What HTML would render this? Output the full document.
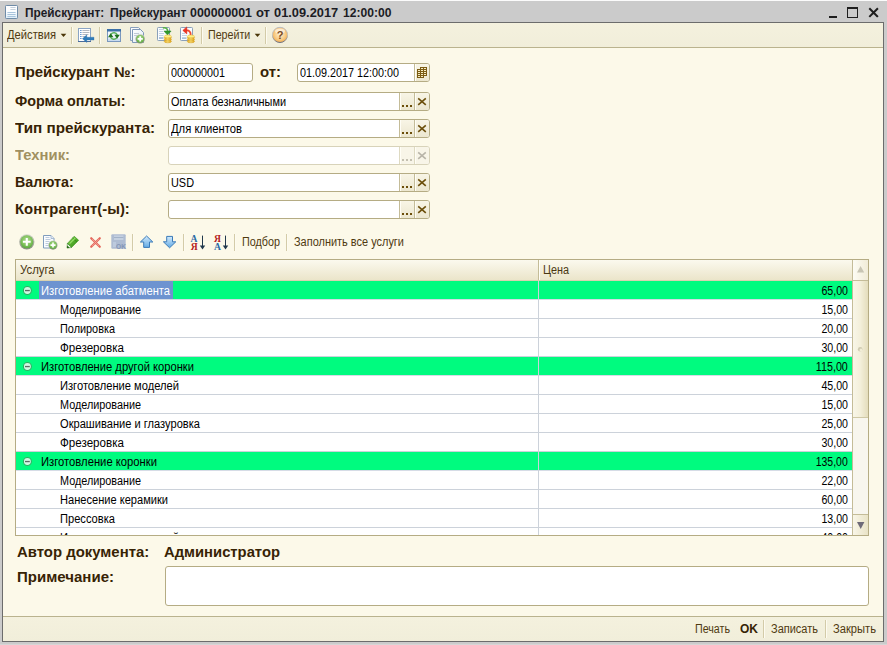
<!DOCTYPE html>
<html><head><meta charset="utf-8">
<style>
html,body{margin:0;padding:0;}
body{width:887px;height:645px;position:relative;overflow:hidden;background:#cbcbcb;font-family:"Liberation Sans",sans-serif;}
.abs,.t,.ic,.row,.fld,.sep{position:absolute;}
.t{white-space:nowrap;line-height:16px;height:16px;}
#topline{left:0;top:0;width:887px;height:1px;background:#fbfbfb;}
#botline{left:0;top:644px;width:887px;height:1px;background:#d6d6d6;}
#frame{left:2px;top:22px;width:880px;height:618px;border:1px solid #6c6c6c;background:#fcf9e9;}
#toolbar{left:3px;top:23px;width:880px;height:24px;background:linear-gradient(#f4f1de,#f1eeda);border-bottom:1px solid #bab38e;}
#botbar{left:3px;top:616px;width:880px;height:24px;background:linear-gradient(#f4f1de,#f1eeda);border-top:1px solid #bab38e;}
.sep{width:1px;background:#d3cba8;box-shadow:1px 0 0 #fdfbf0;}
.fld{height:17px;border:1px solid #b5ac84;border-radius:3px;background:#fff;overflow:hidden;}
.fld.dis{border-color:#d8d3ba;background:#fff;}
.fld .btn{position:absolute;top:0;bottom:0;width:14px;border-left:1px solid #c4bc98;background:linear-gradient(#f8f5e6,#ece7d0);box-shadow:inset 1px 0 0 #fffef6;}
.fld.dis .btn{border-left-color:#dedac2;background:#f8f5e8;}
#tbl{left:15px;top:259px;width:852px;height:275px;border:1px solid #b5ac84;background:#fff;}
#clip{left:16px;top:260px;width:837px;height:275px;overflow:hidden;}
#thead{left:16px;top:260px;width:837px;height:20px;background:linear-gradient(#fbf9ee,#f3efdc 50%,#ebe5ca);border-bottom:1px solid #d9d2b0;}
.row{left:0;width:837px;height:18px;border-bottom:1px solid #ccd2da;background:#fff;}
.row.g{background:#00fb7f;border-bottom-color:#d6dce6;}
#sel{left:23px;top:21px;width:134px;height:18px;background:#6d93d0;}
#colsep{left:522px;top:21px;width:1px;height:260px;background:#ccd2da;}
#hsep{left:538px;top:260px;width:1px;height:20px;background:#c4bc98;box-shadow:1px 0 0 #fffef6;}
#sbar{left:852px;top:260px;width:15px;height:275px;border-left:1px solid #c4bc98;background:#f8f6ee;}
#sup{left:853px;top:260px;width:15px;height:20px;background:linear-gradient(90deg,#fdfcf4,#f1ecd8);border-bottom:1px solid #c4bc98;}
#sthumb{left:853px;top:281px;width:15px;height:136px;background:linear-gradient(90deg,#f9f6e8,#f3efda 50%,#e4ddbc);border-bottom:1px solid #cfc8a6;}
#sdown{left:853px;top:514px;width:15px;height:20px;background:linear-gradient(90deg,#f9f6e8,#e9e3c6);border-top:1px solid #c4bc98;}
#note{left:165px;top:566px;width:702px;height:38px;border:1px solid #b5ac84;border-radius:3px;background:#fff;}
</style></head><body>
<div class="abs" id="topline"></div>
<div class="abs" id="botline"></div>
<div class="abs" id="frame"></div>
<div class="abs" id="toolbar"></div>
<div class="abs" id="botbar"></div>

<!-- toolbar separators -->
<div class="sep" style="left:71px;top:27px;height:17px"></div>
<div class="sep" style="left:99px;top:27px;height:17px"></div>
<div class="sep" style="left:201px;top:27px;height:17px"></div>
<div class="sep" style="left:265px;top:27px;height:17px"></div>
<div class="sep" style="left:132px;top:234px;height:17px"></div>
<div class="sep" style="left:183px;top:234px;height:17px"></div>
<div class="sep" style="left:234px;top:234px;height:17px"></div>
<div class="sep" style="left:286px;top:234px;height:17px"></div>
<div class="sep" style="left:763px;top:620px;height:18px"></div>
<div class="sep" style="left:825px;top:620px;height:18px"></div>

<!-- fields -->
<div class="fld" style="left:168px;top:63px;width:83px"></div>
<div class="fld" style="left:297px;top:63px;width:131px"><div class="btn" style="right:0"></div></div>
<div class="fld" style="left:168px;top:92px;width:260px"><div class="btn" style="right:15px"></div><div class="btn" style="right:0"></div></div>
<div class="fld" style="left:168px;top:119px;width:260px"><div class="btn" style="right:15px"></div><div class="btn" style="right:0"></div></div>
<div class="fld dis" style="left:168px;top:146px;width:260px"><div class="btn" style="right:15px"></div><div class="btn" style="right:0"></div></div>
<div class="fld" style="left:168px;top:173px;width:260px"><div class="btn" style="right:15px"></div><div class="btn" style="right:0"></div></div>
<div class="fld" style="left:168px;top:200px;width:260px"><div class="btn" style="right:15px"></div><div class="btn" style="right:0"></div></div>

<!-- table -->
<div class="abs" id="tbl"></div>
<div class="abs" id="thead"></div>
<div class="abs" id="hsep"></div>
<div class="abs" id="clip">
<div class="row g" style="top:21px"></div>
<div class="row" style="top:40px"></div>
<div class="row" style="top:59px"></div>
<div class="row" style="top:78px"></div>
<div class="row g" style="top:97px"></div>
<div class="row" style="top:116px"></div>
<div class="row" style="top:135px"></div>
<div class="row" style="top:154px"></div>
<div class="row" style="top:173px"></div>
<div class="row g" style="top:192px"></div>
<div class="row" style="top:211px"></div>
<div class="row" style="top:230px"></div>
<div class="row" style="top:249px"></div>
<div class="row" style="top:268px"></div>
<div class="abs" id="sel"></div>
<div class="abs" id="colsep"></div>
<svg class="abs" style="left:6px;top:25px" width="11" height="11" viewBox="0 0 11 11"><circle cx="5.4" cy="5.5" r="4" fill="#d0f8e4" stroke="#28b060" stroke-width="1.1"/><rect x="3" y="4.9" width="4.8" height="1.3" fill="#5c6c64"/></svg>
<svg class="abs" style="left:6px;top:101px" width="11" height="11" viewBox="0 0 11 11"><circle cx="5.4" cy="5.5" r="4" fill="#d0f8e4" stroke="#28b060" stroke-width="1.1"/><rect x="3" y="4.9" width="4.8" height="1.3" fill="#5c6c64"/></svg>
<svg class="abs" style="left:6px;top:196px" width="11" height="11" viewBox="0 0 11 11"><circle cx="5.4" cy="5.5" r="4" fill="#d0f8e4" stroke="#28b060" stroke-width="1.1"/><rect x="3" y="4.9" width="4.8" height="1.3" fill="#5c6c64"/></svg>
<span id="r0" class="t" style="left:25px;transform-origin:0 50%;top:22.899999999999977px;font-size:12px;font-weight:normal;color:#fff;transform:scaleX(0.9310)">Изготовление абатмента</span>
<span id="p0" class="t" style="right:5.399999999999977px;transform-origin:100% 50%;top:22.899999999999977px;font-size:12px;font-weight:normal;color:#000;transform:scaleX(0.8857)">65,00</span>
<span id="r1" class="t" style="left:44px;transform-origin:0 50%;top:41.89999999999998px;font-size:12px;font-weight:normal;color:#000;transform:scaleX(0.9020)">Моделирование</span>
<span id="p1" class="t" style="right:5.399999999999977px;transform-origin:100% 50%;top:41.89999999999998px;font-size:12px;font-weight:normal;color:#000;transform:scaleX(0.8857)">15,00</span>
<span id="r2" class="t" style="left:44px;transform-origin:0 50%;top:60.89999999999998px;font-size:12px;font-weight:normal;color:#000;transform:scaleX(0.9067)">Полировка</span>
<span id="p2" class="t" style="right:5.399999999999977px;transform-origin:100% 50%;top:60.89999999999998px;font-size:12px;font-weight:normal;color:#000;transform:scaleX(0.8857)">20,00</span>
<span id="r3" class="t" style="left:44px;transform-origin:0 50%;top:79.89999999999998px;font-size:12px;font-weight:normal;color:#000;transform:scaleX(0.9672)">Фрезеровка</span>
<span id="p3" class="t" style="right:5.399999999999977px;transform-origin:100% 50%;top:79.89999999999998px;font-size:12px;font-weight:normal;color:#000;transform:scaleX(0.8857)">30,00</span>
<span id="r4" class="t" style="left:25px;transform-origin:0 50%;top:98.89999999999998px;font-size:12px;font-weight:normal;color:#000;transform:scaleX(0.9320)">Изготовление другой коронки</span>
<span id="p4" class="t" style="right:5.399999999999977px;transform-origin:100% 50%;top:98.89999999999998px;font-size:12px;font-weight:normal;color:#000;transform:scaleX(0.8935)">115,00</span>
<span id="r5" class="t" style="left:44px;transform-origin:0 50%;top:117.89999999999998px;font-size:12px;font-weight:normal;color:#000;transform:scaleX(0.9288)">Изготовление моделей</span>
<span id="p5" class="t" style="right:5.399999999999977px;transform-origin:100% 50%;top:117.89999999999998px;font-size:12px;font-weight:normal;color:#000;transform:scaleX(0.8857)">45,00</span>
<span id="r6" class="t" style="left:44px;transform-origin:0 50%;top:136.89999999999998px;font-size:12px;font-weight:normal;color:#000;transform:scaleX(0.9020)">Моделирование</span>
<span id="p6" class="t" style="right:5.399999999999977px;transform-origin:100% 50%;top:136.89999999999998px;font-size:12px;font-weight:normal;color:#000;transform:scaleX(0.8857)">15,00</span>
<span id="r7" class="t" style="left:44px;transform-origin:0 50%;top:155.89999999999998px;font-size:12px;font-weight:normal;color:#000;transform:scaleX(0.9250)">Окрашивание и глазуровка</span>
<span id="p7" class="t" style="right:5.399999999999977px;transform-origin:100% 50%;top:155.89999999999998px;font-size:12px;font-weight:normal;color:#000;transform:scaleX(0.8857)">25,00</span>
<span id="r8" class="t" style="left:44px;transform-origin:0 50%;top:174.89999999999998px;font-size:12px;font-weight:normal;color:#000;transform:scaleX(0.9672)">Фрезеровка</span>
<span id="p8" class="t" style="right:5.399999999999977px;transform-origin:100% 50%;top:174.89999999999998px;font-size:12px;font-weight:normal;color:#000;transform:scaleX(0.8857)">30,00</span>
<span id="r9" class="t" style="left:25px;transform-origin:0 50%;top:193.89999999999998px;font-size:12px;font-weight:normal;color:#000;transform:scaleX(0.9370)">Изготовление коронки</span>
<span id="p9" class="t" style="right:5.399999999999977px;transform-origin:100% 50%;top:193.89999999999998px;font-size:12px;font-weight:normal;color:#000;transform:scaleX(0.8719)">135,00</span>
<span id="r10" class="t" style="left:44px;transform-origin:0 50%;top:212.89999999999998px;font-size:12px;font-weight:normal;color:#000;transform:scaleX(0.9020)">Моделирование</span>
<span id="p10" class="t" style="right:5.399999999999977px;transform-origin:100% 50%;top:212.89999999999998px;font-size:12px;font-weight:normal;color:#000;transform:scaleX(0.8857)">22,00</span>
<span id="r11" class="t" style="left:44px;transform-origin:0 50%;top:231.89999999999998px;font-size:12px;font-weight:normal;color:#000;transform:scaleX(0.9233)">Нанесение керамики</span>
<span id="p11" class="t" style="right:5.399999999999977px;transform-origin:100% 50%;top:231.89999999999998px;font-size:12px;font-weight:normal;color:#000;transform:scaleX(0.8857)">60,00</span>
<span id="r12" class="t" style="left:44px;transform-origin:0 50%;top:250.89999999999998px;font-size:12px;font-weight:normal;color:#000;transform:scaleX(0.9268)">Прессовка</span>
<span id="p12" class="t" style="right:5.399999999999977px;transform-origin:100% 50%;top:250.89999999999998px;font-size:12px;font-weight:normal;color:#000;transform:scaleX(0.8857)">13,00</span>
<span id="r13" class="t" style="left:44px;transform-origin:0 50%;top:269.9px;font-size:12px;font-weight:normal;color:#000;transform:scaleX(0.9288)">Изготовление моделей</span>
<span id="p13" class="t" style="right:5.399999999999977px;transform-origin:100% 50%;top:269.9px;font-size:12px;font-weight:normal;color:#000;transform:scaleX(0.8857)">40,00</span>
</div>
<div class="abs" id="sbar"></div>
<div class="abs" id="sup"></div>
<div class="abs" id="sthumb"></div>
<div class="abs" id="sdown"></div>
<div class="abs" id="note"></div>

<svg class="abs" style="left:0;top:0" width="887" height="645" viewBox="0 0 887 645">
<defs>
<linearGradient id="gGreen" x1="0" y1="0" x2="0" y2="1"><stop offset="0" stop-color="#a8d88c"/><stop offset="0.5" stop-color="#5cb040"/><stop offset="1" stop-color="#3e9428"/></linearGradient>
<linearGradient id="gOrange" x1="0" y1="0" x2="0" y2="1"><stop offset="0" stop-color="#fbe3b4"/><stop offset="0.55" stop-color="#f4b45c"/><stop offset="1" stop-color="#ee9a3a"/></linearGradient>
<linearGradient id="gBlueUp" x1="0" y1="0" x2="0" y2="1"><stop offset="0" stop-color="#d2eafc"/><stop offset="1" stop-color="#62aae4"/></linearGradient>
<linearGradient id="gGold" x1="0" y1="0" x2="1" y2="0"><stop offset="0" stop-color="#e8b020"/><stop offset="0.5" stop-color="#fbe27a"/><stop offset="1" stop-color="#e0a010"/></linearGradient>
<linearGradient id="gDoc" x1="0" y1="0" x2="1" y2="1"><stop offset="0" stop-color="#ffffff"/><stop offset="1" stop-color="#dfe9f4"/></linearGradient>
<linearGradient id="gPencil" x1="0" y1="0" x2="1" y2="1"><stop offset="0" stop-color="#7ed048"/><stop offset="1" stop-color="#2e8a12"/></linearGradient>
<radialGradient id="gGreenR" cx="0.5" cy="0.4" r="0.6"><stop offset="0" stop-color="#b0dc94"/><stop offset="0.6" stop-color="#84c460"/><stop offset="1" stop-color="#5aa840"/></radialGradient>
<linearGradient id="gRing" x1="0" y1="0" x2="0" y2="1"><stop offset="0" stop-color="#d4d8cc"/><stop offset="1" stop-color="#888c80"/></linearGradient>
<radialGradient id="gHelp" cx="0.5" cy="0.45" r="0.6"><stop offset="0" stop-color="#fdf0d4"/><stop offset="0.55" stop-color="#f9cf8c"/><stop offset="1" stop-color="#f2a540"/></radialGradient>
<linearGradient id="gRing2" x1="0" y1="0" x2="0" y2="1"><stop offset="0" stop-color="#b8bcc4"/><stop offset="0.5" stop-color="#c8c4b8"/><stop offset="1" stop-color="#6c7080"/></linearGradient>
<linearGradient id="gTDoc" x1="0" y1="0" x2="0" y2="1"><stop offset="0" stop-color="#ffffff"/><stop offset="0.5" stop-color="#fbfdff"/><stop offset="1" stop-color="#dcecf8"/></linearGradient>
</defs>

<!-- window title icon (document) -->
<g>
<rect x="5.5" y="5.5" width="12" height="13" rx="0.8" fill="url(#gTDoc)" stroke="#6f8ca8" stroke-width="1"/>
<path d="M10.4 7.5h5.2M10.4 9.5h5.2" stroke="#c0ccd8" stroke-width="0.9"/>
<path d="M7.4 12.5h8.2M7.4 14.5h8.2M7.4 16.5h8.2" stroke="#a8c4dc" stroke-width="1"/>
</g>

<!-- window controls -->
<rect x="829" y="16" width="8" height="2" fill="#1e1e1e"/>
<rect x="847.5" y="8" width="10" height="9.5" fill="none" stroke="#1e1e1e" stroke-width="1"/>
<rect x="847" y="7" width="11" height="2" fill="#1e1e1e"/>
<path d="M870 9l7.2 7.2M877.2 9l-7.2 7.2" stroke="#1e1e1e" stroke-width="2" stroke-linecap="square"/>

<!-- toolbar dropdown arrows -->
<path d="M60.7 33.7h5.6l-2.8 3.2z" fill="#4a3608"/>
<path d="M254.7 33.7h5.6l-2.8 3.2z" fill="#4a3608"/>

<!-- toolbar icon 1: list + arrow -->
<g>
<rect x="78.5" y="28.5" width="12" height="13" fill="#fff" stroke="#8aa4c4"/>
<rect x="78" y="41" width="13" height="1" fill="#4a6c9c"/>
<g fill="#6a9cd4"><rect x="80" y="30" width="1.6" height="1"/><rect x="80" y="32" width="1.6" height="1"/><rect x="80" y="34" width="1.6" height="1"/><rect x="80" y="36" width="1.6" height="1"/><rect x="80" y="38" width="1.6" height="1"/></g>
<g fill="#b4b8c0"><rect x="82.4" y="30" width="7" height="1"/><rect x="82.4" y="32" width="7" height="1"/><rect x="82.4" y="34" width="6" height="1"/><rect x="82.4" y="36" width="3" height="1"/></g>
<path d="M82.4 38.7l4.4-3.9v2.4h7.2v2.9h-7.2v2.5z" fill="#2f7cba" stroke="#2a6aa4" stroke-width="0.3"/>
</g>

<!-- toolbar icon 2: window refresh -->
<g>
<rect x="107.5" y="29.5" width="13" height="12" fill="#f0f6fc" stroke="#7a98be"/>
<rect x="107" y="29" width="14" height="2.5" fill="#3c70a8"/>
<rect x="108" y="38.5" width="12" height="2.5" fill="#cadcf0"/>
<path d="M111 34.2A3.7 3.7 0 0 1 117.3 35" fill="none" stroke="#5cb45c" stroke-width="1.5"/>
<path d="M116.6 38A3.7 3.7 0 0 1 110.5 37" fill="none" stroke="#5cb45c" stroke-width="1.5"/>
<path d="M108 37.2h5.4l-2.7-4z" fill="#1e701e"/>
<path d="M114.4 34.8h5.4l-2.7 4z" fill="#1e701e"/>
</g>

<!-- toolbar icon 3: copy + plus -->
<g>
<path d="M130.5 27.5h8l3 3v10h-11z" fill="url(#gDoc)" stroke="#8aa0bc"/>
<path d="M132.5 29.5h8l3 3v10h-11z" fill="url(#gDoc)" stroke="#7f98b8"/>
<path d="M134 33.5h5M134 35.5h4" stroke="#c0cad8"/>
<circle cx="140.2" cy="38.8" r="4.8" fill="url(#gRing)"/><circle cx="140.2" cy="38.8" r="3.9" fill="url(#gGreenR)"/>
<path d="M137.6 38.8h5.2M140.2 36.2v5.2" stroke="#fff" stroke-width="1.7"/>
</g>

<!-- toolbar icon 4: doc + green arrow + coins -->
<g>
<rect x="157.5" y="27.5" width="12" height="13" rx="0.8" fill="#fafcfe" stroke="#8aa0ba"/>
<path d="M159 29.5h5M159 31.5h4M159 33.5h5M159 35.5h4.5" stroke="#c2d2e4"/>
<path d="M159 37.5h4.5M159 38.5h4.5" stroke="#aac2dc"/>
<path d="M162.8 27.9c3.2-0.7 4.9 0.9 4.9 3.4" fill="none" stroke="#58b048" stroke-width="1.7"/>
<path d="M163.9 31h7.2l-3.6 4z" fill="#2f9a2c" stroke="#1f7c1f" stroke-width="0.5" stroke-linejoin="round"/>
<ellipse cx="167.8" cy="41.4" rx="3.6" ry="1.4" fill="url(#gGold)" stroke="#d09818" stroke-width="0.5"/>
<ellipse cx="167.8" cy="39.6" rx="3.6" ry="1.4" fill="url(#gGold)" stroke="#d09818" stroke-width="0.5"/>
<ellipse cx="167.8" cy="37.8" rx="3.6" ry="1.4" fill="url(#gGold)" stroke="#d09818" stroke-width="0.5"/>
<ellipse cx="167.8" cy="36.4" rx="3.6" ry="1.4" fill="#fdf088" stroke="#e0b030" stroke-width="0.5"/>
</g>

<!-- toolbar icon 5: doc + red arrow + coins -->
<g>
<rect x="180.5" y="27.5" width="12" height="13" rx="0.8" fill="#fafcfe" stroke="#8aa0ba"/>
<path d="M182 33.5h3M182 35.5h5M182 37.5h4.5" stroke="#c2d2e4"/>
<path d="M182 38.5h4.5" stroke="#aac2dc"/>
<path d="M186 30.5c3.4-0.4 5 1.6 4.6 4.6" fill="none" stroke="#f04a30" stroke-width="1.8"/>
<path d="M182.8 30.4l4-3.5v7z" fill="#ee3422" stroke="#d82414" stroke-width="0.5" stroke-linejoin="round"/>
<ellipse cx="190.9" cy="41.4" rx="3.6" ry="1.4" fill="url(#gGold)" stroke="#d09818" stroke-width="0.5"/>
<ellipse cx="190.9" cy="39.6" rx="3.6" ry="1.4" fill="url(#gGold)" stroke="#d09818" stroke-width="0.5"/>
<ellipse cx="190.9" cy="37.8" rx="3.6" ry="1.4" fill="url(#gGold)" stroke="#d09818" stroke-width="0.5"/>
<ellipse cx="190.9" cy="36.4" rx="3.6" ry="1.4" fill="#fdf088" stroke="#e0b030" stroke-width="0.5"/>
</g>

<!-- help icon -->
<g>
<circle cx="280" cy="34.9" r="7.6" fill="url(#gHelp)" stroke="url(#gRing2)" stroke-width="1"/>
<ellipse cx="280" cy="31" rx="5" ry="2.6" fill="#fff" opacity="0.55"/>
<text x="280" y="39" text-anchor="middle" font-family="Liberation Sans" font-weight="bold" font-size="11" fill="#7a4a1c">?</text>
</g>

<!-- field buttons -->
<rect x="402" y="105" width="2" height="2" fill="#6b4e0a"/><rect x="406" y="105" width="2" height="2" fill="#6b4e0a"/><rect x="410" y="105" width="2" height="2" fill="#6b4e0a"/><path d="M418.2 98.4l7.6 6.4M425.8 98.4l-7.6 6.4" stroke="#6b4e0a" stroke-width="1.6"/>
<rect x="402" y="132" width="2" height="2" fill="#6b4e0a"/><rect x="406" y="132" width="2" height="2" fill="#6b4e0a"/><rect x="410" y="132" width="2" height="2" fill="#6b4e0a"/><path d="M418.2 125.4l7.6 6.4M425.8 125.4l-7.6 6.4" stroke="#6b4e0a" stroke-width="1.6"/>
<rect x="402" y="186" width="2" height="2" fill="#6b4e0a"/><rect x="406" y="186" width="2" height="2" fill="#6b4e0a"/><rect x="410" y="186" width="2" height="2" fill="#6b4e0a"/><path d="M418.2 179.4l7.6 6.4M425.8 179.4l-7.6 6.4" stroke="#6b4e0a" stroke-width="1.6"/>
<rect x="402" y="213" width="2" height="2" fill="#6b4e0a"/><rect x="406" y="213" width="2" height="2" fill="#6b4e0a"/><rect x="410" y="213" width="2" height="2" fill="#6b4e0a"/><path d="M418.2 206.4l7.6 6.4M425.8 206.4l-7.6 6.4" stroke="#6b4e0a" stroke-width="1.6"/>
<rect x="402" y="159" width="2" height="2" fill="#c4c0b0"/><rect x="406" y="159" width="2" height="2" fill="#c4c0b0"/><rect x="410" y="159" width="2" height="2" fill="#c4c0b0"/><path d="M418.2 152.4l7.6 6.4M425.8 152.4l-7.6 6.4" stroke="#b8b4a8" stroke-width="1.6"/>

<!-- calendar icon -->
<g>
<path d="M420 67h7v9h-3v2h-7v-9h3z" fill="#7c5c14"/>
<g fill="#f6eec4"><rect x="418" y="70" width="2" height="1"/><rect x="418" y="72" width="2" height="1"/><rect x="418" y="74" width="2" height="1"/><rect x="418" y="76" width="2" height="1"/><rect x="421" y="68" width="2" height="1"/><rect x="421" y="70" width="2" height="1"/><rect x="421" y="72" width="2" height="1"/><rect x="421" y="74" width="2" height="1"/><rect x="421" y="76" width="2" height="1"/><rect x="424" y="68" width="2" height="1"/><rect x="424" y="70" width="2" height="1"/><rect x="424" y="72" width="2" height="1"/><rect x="424" y="74" width="2" height="1"/></g>
</g>

<!-- command bar icons -->
<g>
<circle cx="26.8" cy="241.8" r="7.6" fill="url(#gRing)"/>
<circle cx="26.8" cy="241.8" r="6.5" fill="url(#gGreenR)"/>
<path d="M22.9 241.8h7.8M26.8 237.9v7.8" stroke="#fff" stroke-width="2.1"/>
</g>
<g>
<path d="M43.5 235.5h7.5l3 3v9.5h-10.5z" fill="#fafcfe" stroke="#7f9cbc"/>
<path d="M51 235.5v3h3" fill="#e4ecf6" stroke="#9ab0cc" stroke-width="0.8"/>
<path d="M45.5 237.5h4M45.5 239.5h5M45.5 241.5h4M45.5 243.5h3M45.5 245.5h3" stroke="#bccadc"/>
<circle cx="53" cy="245.1" r="4.6" fill="url(#gRing)"/>
<circle cx="53" cy="245.1" r="3.8" fill="url(#gGreenR)"/>
<path d="M50.5 245.1h5M53 242.6v5" stroke="#fff" stroke-width="1.6"/>
</g>
<g>
<path d="M74.2 236.2l4.5 4.1-7.2 7.2-4.1-4.1z" fill="url(#gPencil)" stroke="#2c8a14" stroke-width="0.5"/>
<path d="M72.6 237.9l4.3 4.1" stroke="#1e7a0c" stroke-width="1" opacity="0.6"/>
<path d="M69.6 243.6l5.6-5.6" stroke="#a4ec78" stroke-width="1.3" opacity="0.8"/>
<path d="M67.4 243.4l4.1 4.1-4.5 0.6z" fill="#f4fbf0"/>
<path d="M67 248.1l0.3-2.6 2.4 2.3z" fill="#175c08"/>
<path d="M67.4 243.4l4.1 4.1-4.5 0.6z" fill="none" stroke="#1f6c0c" stroke-width="0.5"/>
</g>
<g>
<path d="M91.2 238.2l8.6 8.6M99.8 238.2l-8.6 8.6" stroke="#e4685c" stroke-width="2.2" stroke-linecap="round"/>
<path d="M92 239l7 7M99 239l-7 7" stroke="#f3aaa2" stroke-width="0.7"/>
</g>
<g>
<rect x="111.3" y="234.2" width="14.4" height="14.5" rx="1" fill="#aebcd2"/>
<rect x="114" y="235.4" width="9.4" height="4.6" fill="#c4d0e0"/>
<rect x="114" y="237" width="9.4" height="1" fill="#a2b2c8"/>
<rect x="113" y="242" width="3" height="5" fill="#bccade"/>
<text x="116" y="248.6" font-family="Liberation Sans" font-weight="bold" font-size="6.4" fill="#8496b6" textLength="10" lengthAdjust="spacingAndGlyphs">OK</text>
</g>
<!-- up / down -->
<path d="M146.6 236l6.2 6h-3.3v5.4h-5.8v-5.4h-3.3z" fill="url(#gBlueUp)" stroke="#3a7ab8" stroke-width="1" stroke-linejoin="round"/>
<path d="M169.6 247.8l6.2-6h-3.3v-5.4h-5.8v5.4h-3.3z" fill="url(#gBlueUp)" stroke="#3a7ab8" stroke-width="1" stroke-linejoin="round"/>
<!-- sort icons -->
<g font-family="Liberation Serif" font-weight="bold" font-size="9.6">
<text x="190.6" y="241.8" fill="#2a6aa4">A</text>
<text x="190.8" y="250" fill="#b4201c">Я</text>
<path d="M202.5 235.6v12" stroke="#20384c" stroke-width="1"/><path d="M199.8 245.4h5.4l-2.7 4z" fill="#20384c"/>
<text x="214" y="241.8" fill="#b4201c">Я</text>
<text x="214" y="250" fill="#2a6aa4">A</text>
<path d="M225.5 235.6v12" stroke="#20384c" stroke-width="1"/><path d="M222.8 245.4h5.4l-2.7 4z" fill="#20384c"/>
</g>

<!-- scrollbar arrows -->
<path d="M857 272.6h7.2l-3.6-6.6z" fill="#c8c5b4"/>
<path d="M857 522h7.4l-3.7 7z" fill="#6e6a78"/>
<circle cx="860.2" cy="349.2" r="2.3" fill="#cfcab0"/><circle cx="861" cy="350" r="1.5" fill="#f1edd6"/>
</svg>

<span id="ti1" class="t" style="left:24.8px;transform-origin:0 50%;top:4.9px;font-size:12.5px;font-weight:bold;color:#1c1c24;transform:scaleX(0.9464)">Прейскурант:</span>
<span id="ti2" class="t" style="left:109.5px;transform-origin:0 50%;top:4.9px;font-size:12.5px;font-weight:bold;color:#1c1c24;transform:scaleX(0.9621)">Прейскурант</span>
<span id="ti3" class="t" style="left:190.2px;transform-origin:0 50%;top:4.9px;font-size:12.5px;font-weight:bold;color:#1c1c24;transform:scaleX(0.9908)">000000001</span>
<span id="ti4" class="t" style="left:256.4px;transform-origin:0 50%;top:4.9px;font-size:12.5px;font-weight:bold;color:#1c1c24;transform:scaleX(1.0407)">от</span>
<span id="ti5" class="t" style="left:274.4px;transform-origin:0 50%;top:4.9px;font-size:12.5px;font-weight:bold;color:#1c1c24;transform:scaleX(1.0262)">01.09.2017</span>
<span id="ti6" class="t" style="left:343.3px;transform-origin:0 50%;top:4.9px;font-size:12.5px;font-weight:bold;color:#1c1c24;transform:scaleX(0.9671)">12:00:00</span>
<span id="tb1" class="t" style="left:7px;transform-origin:0 50%;top:27.0px;font-size:12px;font-weight:normal;color:#4f3a10;transform:scaleX(0.9319)">Действия</span>
<span id="tb2" class="t" style="left:208.3px;transform-origin:0 50%;top:27.0px;font-size:12px;font-weight:normal;color:#4f3a10;transform:scaleX(0.8894)">Перейти</span>
<span id="l1" class="t" style="left:15.3px;transform-origin:0 50%;top:63.5px;font-size:14px;font-weight:bold;color:#372304;transform:scaleX(1.0643)">Прейскурант №:</span>
<span id="l1b" class="t" style="left:260.0px;transform-origin:0 50%;top:63.5px;font-size:14px;font-weight:bold;color:#372304;transform:scaleX(1.0641)">от:</span>
<span id="l2" class="t" style="left:15.3px;transform-origin:0 50%;top:92.5px;font-size:14px;font-weight:bold;color:#372304;transform:scaleX(1.0251)">Форма оплаты:</span>
<span id="l3" class="t" style="left:15.3px;transform-origin:0 50%;top:119.5px;font-size:14px;font-weight:bold;color:#372304;transform:scaleX(1.0879)">Тип прейскуранта:</span>
<span id="l4" class="t" style="left:15.3px;transform-origin:0 50%;top:146.5px;font-size:14px;font-weight:bold;color:#a09060;transform:scaleX(1.0580)">Техник:</span>
<span id="l5" class="t" style="left:15.3px;transform-origin:0 50%;top:173.5px;font-size:14px;font-weight:bold;color:#372304;transform:scaleX(1.0173)">Валюта:</span>
<span id="l6" class="t" style="left:15.3px;transform-origin:0 50%;top:200.5px;font-size:14px;font-weight:bold;color:#372304;transform:scaleX(1.0602)">Контрагент(-ы):</span>
<span id="f1" class="t" style="left:170.6px;transform-origin:0 50%;top:64.5px;font-size:12px;font-weight:normal;color:#000;transform:scaleX(0.8988)">000000001</span>
<span id="f1b" class="t" style="left:300px;transform-origin:0 50%;top:64.5px;font-size:12px;font-weight:normal;color:#000;transform:scaleX(0.8991)">01.09.2017 12:00:00</span>
<span id="f2" class="t" style="left:171px;transform-origin:0 50%;top:93.5px;font-size:12px;font-weight:normal;color:#000;transform:scaleX(0.9074)">Оплата безналичными</span>
<span id="f3" class="t" style="left:171px;transform-origin:0 50%;top:120.5px;font-size:12px;font-weight:normal;color:#000;transform:scaleX(0.9371)">Для клиентов</span>
<span id="f5" class="t" style="left:171px;transform-origin:0 50%;top:174.5px;font-size:12px;font-weight:normal;color:#000;transform:scaleX(0.9075)">USD</span>
<span id="c1" class="t" style="left:242px;transform-origin:0 50%;top:234.0px;font-size:12px;font-weight:normal;color:#4f3a10;transform:scaleX(0.8991)">Подбор</span>
<span id="c2" class="t" style="left:294px;transform-origin:0 50%;top:234.0px;font-size:12px;font-weight:normal;color:#4f3a10;transform:scaleX(0.9132)">Заполнить все услуги</span>
<span id="h1" class="t" style="left:20.3px;transform-origin:0 50%;top:262.0px;font-size:12px;font-weight:normal;color:#4a3812;transform:scaleX(0.9478)">Услуга</span>
<span id="h2" class="t" style="left:543px;transform-origin:0 50%;top:262.0px;font-size:12px;font-weight:normal;color:#4a3812;transform:scaleX(0.9009)">Цена</span>
<span id="a1" class="t" style="left:17.1px;transform-origin:0 50%;top:543.5px;font-size:14px;font-weight:bold;color:#372304;transform:scaleX(1.0648)">Автор документа:</span>
<span id="a2" class="t" style="left:164.0px;transform-origin:0 50%;top:543.5px;font-size:14px;font-weight:bold;color:#372304;transform:scaleX(1.0566)">Администратор</span>
<span id="a3" class="t" style="left:17.1px;transform-origin:0 50%;top:568.5px;font-size:14px;font-weight:bold;color:#372304;transform:scaleX(1.0724)">Примечание:</span>
<span id="b1" class="t" style="left:695px;transform-origin:0 50%;top:621.0px;font-size:12px;font-weight:normal;color:#4f3a10;transform:scaleX(0.8903)">Печать</span>
<span id="b2" class="t" style="left:740px;transform-origin:0 50%;top:621.0px;font-size:13px;font-weight:bold;color:#372304;transform:scaleX(0.9231)">OK</span>
<span id="b3" class="t" style="left:771px;transform-origin:0 50%;top:621.0px;font-size:12px;font-weight:normal;color:#4f3a10;transform:scaleX(0.9165)">Записать</span>
<span id="b4" class="t" style="left:833px;transform-origin:0 50%;top:621.0px;font-size:12px;font-weight:normal;color:#4f3a10;transform:scaleX(0.9304)">Закрыть</span>
</body></html>
